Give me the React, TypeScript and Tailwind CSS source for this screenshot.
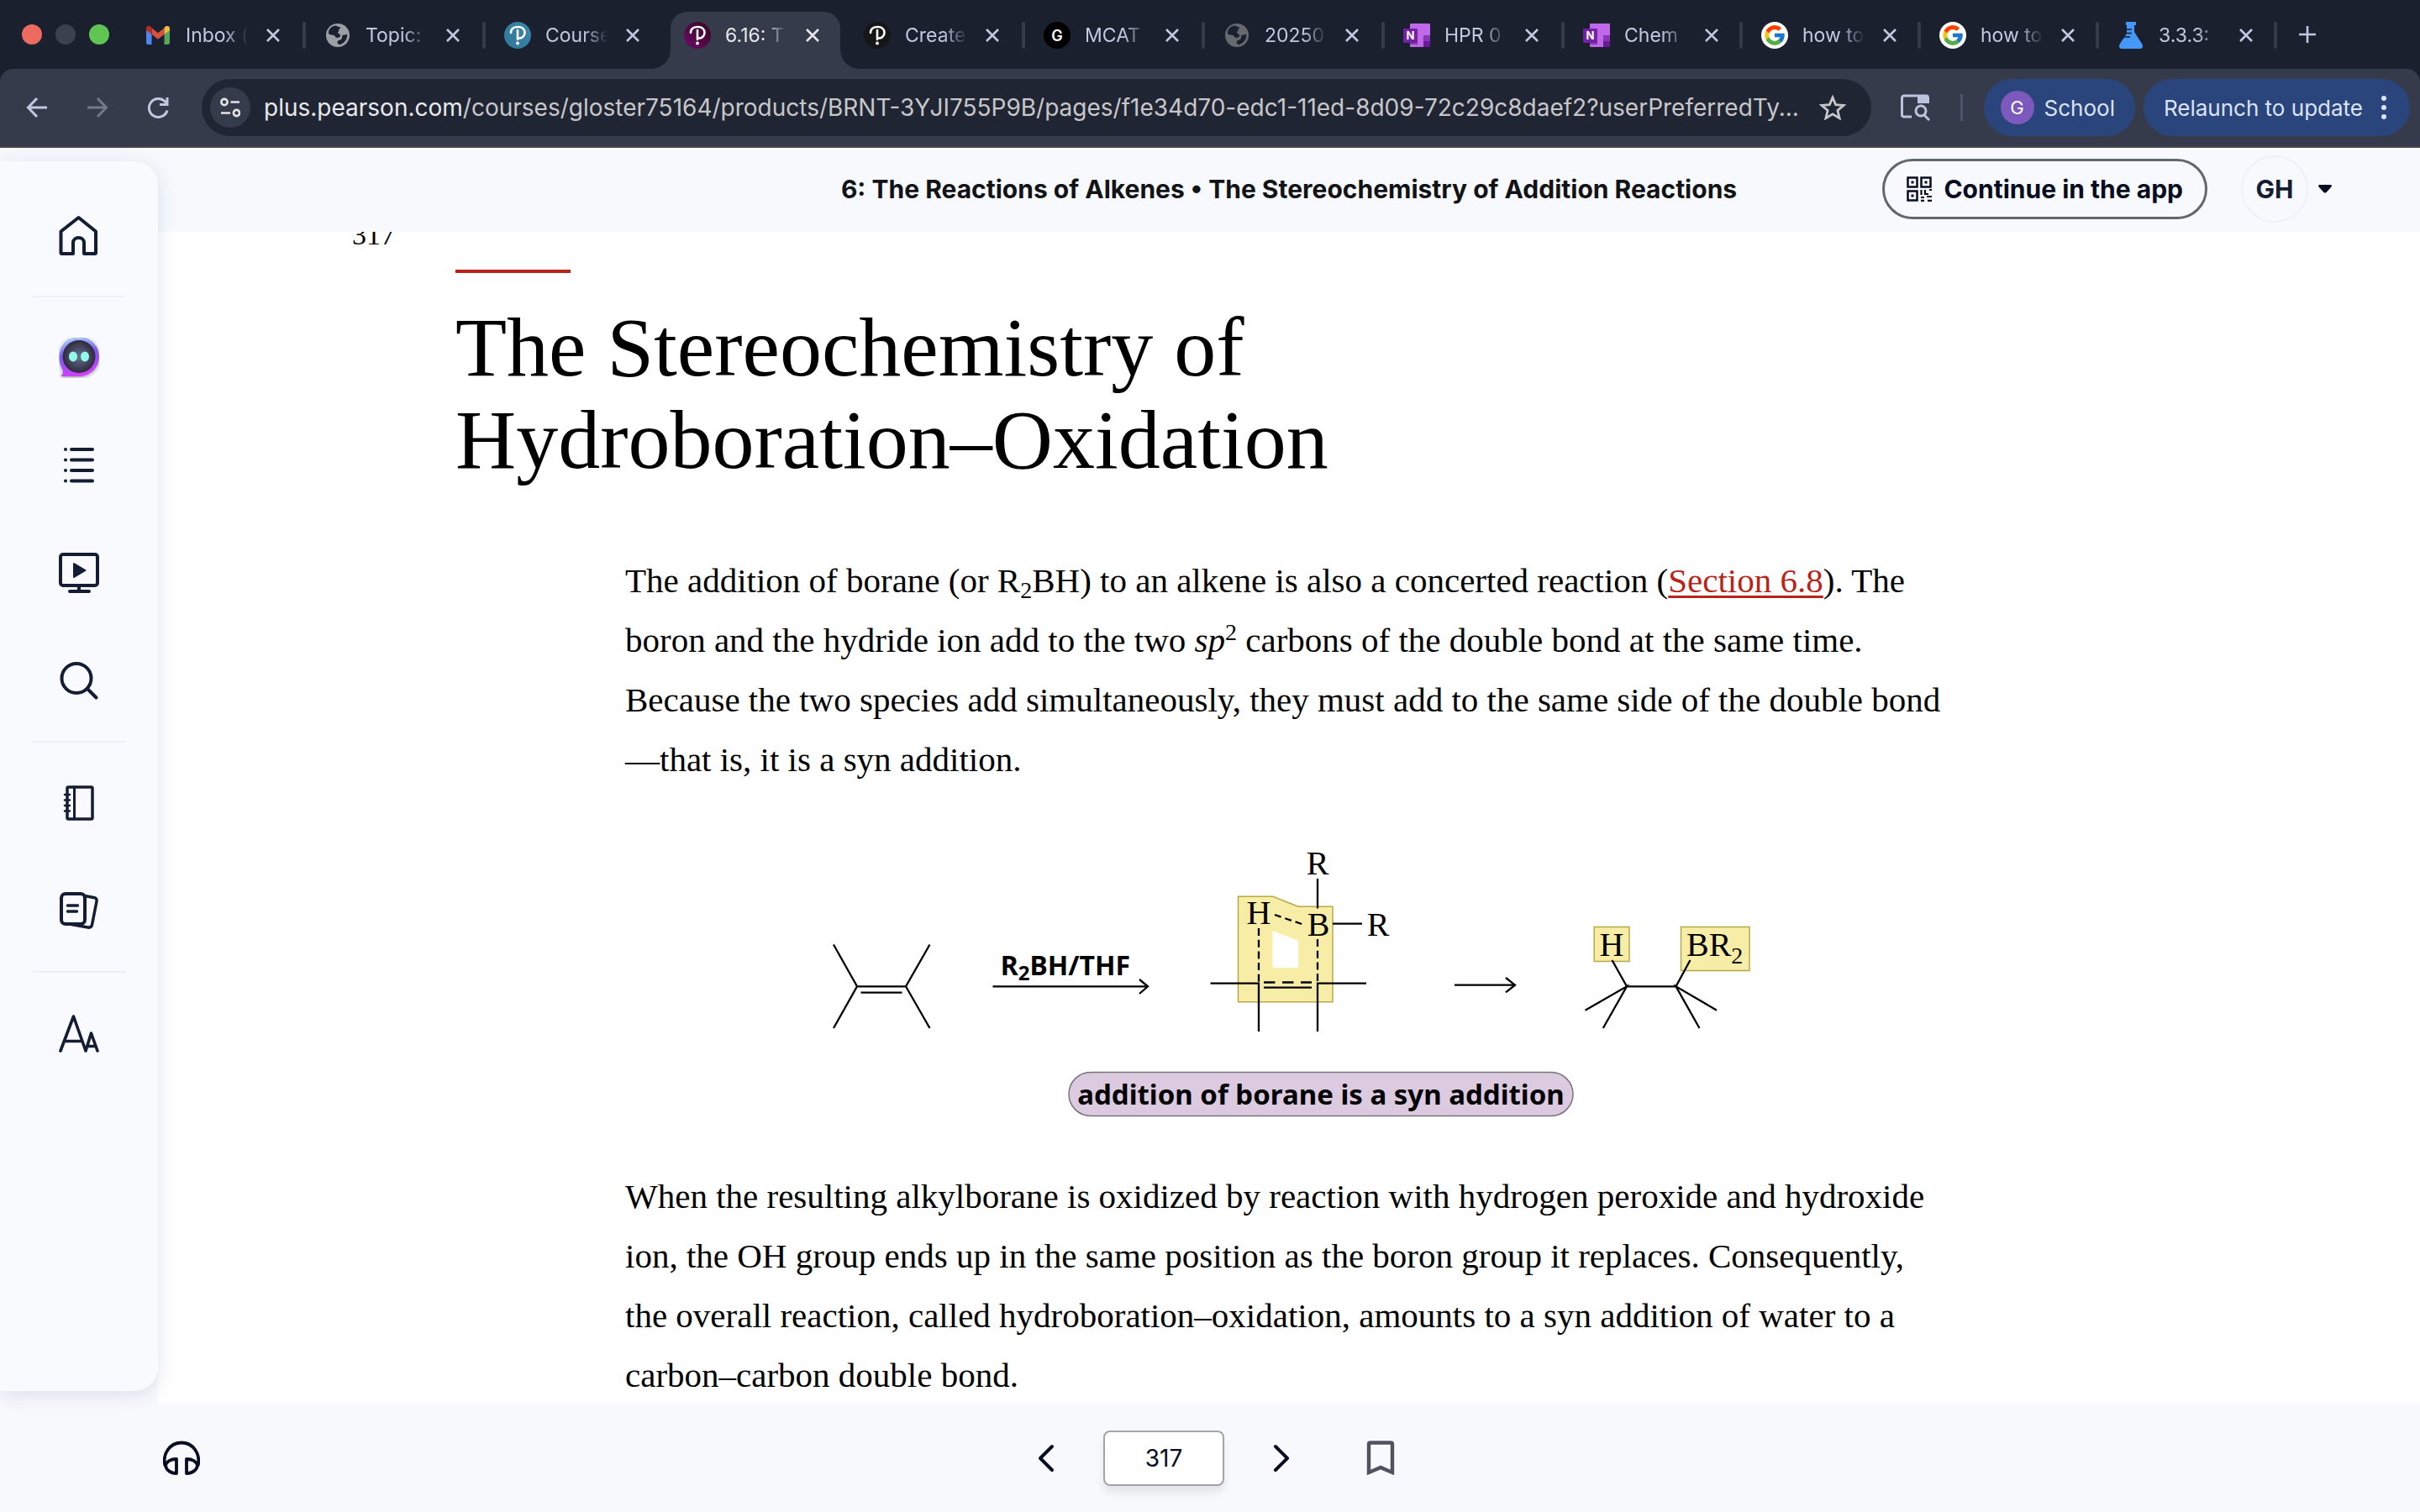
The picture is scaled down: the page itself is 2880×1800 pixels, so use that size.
import type { ReactNode } from "react";
import { FcGoogle } from "react-icons/fc";

const PearsonIcon = ({ id, from, to }: { id: string; from: string; to: string }) => (
  <svg viewBox="0 0 32 32" className="size-8">
    <defs>
      <linearGradient id={id} x1="1" y1="0" x2="0" y2="1">
        <stop offset="0" stopColor={from} />
        <stop offset="1" stopColor={to} />
      </linearGradient>
    </defs>
    <circle cx="16" cy="16" r="16" fill={`url(#${id})`} />
    <path d="M8 13c0-5 4-7 8.500-7 5 0 8 3 8 7s-3.500 7-8 6.500M16 10v11" fill="none" stroke="#fff" strokeWidth="2.600" strokeLinecap="round" />
    <circle cx="16" cy="25.500" r="1.900" fill="#fff" />
  </svg>
);

const GlobeIcon = ({ color }: { color: string }) => (
  <svg viewBox="0 0 28 28" className="size-7">
    <circle cx="14" cy="14" r="14" fill={color} />
    <path d="M12 2.500c2 2 6 1 6 4s-4 2-4 4 3 1 3 4-5 3-7 1-6-1-7-4C3 6 7 3 12 2.500zM25 12c1 5-2 11-8 13-3 0-4-2-3-4s5-1 5-4 1-4 6-5z" fill="#1b202f" />
    <path d="M3 13c3 1 8 0 8 3s-3 2-3 4l1 4c-4-2-6-7-6-11zM18 4c-1 3-3 2-3 4s5 1 5 4 3 1 5 1c0-4-3-8-7-9z" fill={color} />
  </svg>
);

const GmailIcon = () => (
  <svg viewBox="0 0 28 22" className="w-7">
    <path d="M0 3v17a2 2 0 0 0 2 2h4.500V9z" fill="#4f86ec" />
    <path d="M28 3v17a2 2 0 0 1-2 2h-4.500V9z" fill="#58a55c" />
    <path d="M6.500 2.200 14 8.200l7.500-6v7.600L14 15.800l-7.500-6z" fill="#d85040" />
    <path d="M0 3c0-3 3.400-4 5.400-2.200l1.100 1.400v7.600L0 5z" fill="#b52d25" />
    <path d="M28 3c0-3-3.400-4-5.400-2.200l-1.100 1.400v7.600L28 5z" fill="#f2be42" />
  </svg>
);

const OneNoteIcon = () => (
  <svg viewBox="0 0 32 28" className="w-8">
    <rect x="8" width="24" height="28" rx="1" fill="#c069e8" />
    <rect x="24" y="14" width="8" height="7" fill="#8a35b8" />
    <rect x="24" y="21" width="8" height="7" fill="#6a1a94" />
    <rect x="8" y="22" width="9" height="3" fill="#8440a8" />
    <rect y="6" width="17" height="17" rx="1" fill="#7222a3" />
    <text x="8.500" y="19" textAnchor="middle" fontSize="13" fontWeight="700" fontFamily="Inter" fill="#fff">N</text>
  </svg>
);

const FlaskIcon = () => (
  <svg viewBox="0 0 30 32" className="h-8">
    <path d="M9 0h12v4h-2v8l9 14c2 3 1 6-3 6H5c-4 0-5-3-3-6l8-12V4H9z" fill="#4598f7" />
    <path d="M10 9h6M10 13.500h6M7 18h7" stroke="#1b202f" strokeWidth="1.600" />
  </svg>
);

const GBadge = () => (
  <span className="flex size-8 items-center justify-center rounded-full bg-black text-[18px] font-semibold text-white">G</span>
);

const GoogleBadge = () => (
  <span className="flex size-8 items-center justify-center rounded-full bg-white">
    <FcGoogle className="size-7" />
  </span>
);

const tabs: { label: string; icon: ReactNode; active?: boolean; line?: boolean; narrow?: boolean }[] = [
  { label: "Inbox (", icon: <GmailIcon />, line: true },
  { label: "Topic:", icon: <GlobeIcon color="#9b9fa3" />, line: true },
  { label: "Course", icon: <PearsonIcon id="p1" from="#3b87a8" to="#2f769b" /> },
  { label: "6.16: T", icon: <PearsonIcon id="p2" from="#33051f" to="#6d0b6b" />, active: true },
  { label: "Create", icon: <PearsonIcon id="p3" from="#161616" to="#161616" />, line: true },
  { label: "MCAT", icon: <GBadge />, line: true },
  { label: "20250", icon: <GlobeIcon color="#66696d" />, line: true },
  { label: "HPR 0", icon: <OneNoteIcon />, line: true },
  { label: "Chem", icon: <OneNoteIcon />, line: true, narrow: true },
  { label: "how to", icon: <GoogleBadge />, line: true, narrow: true },
  { label: "how to", icon: <GoogleBadge />, line: true, narrow: true },
  { label: "3.3.3:", icon: <FlaskIcon />, line: true, narrow: true },
];

function Flare({ className }: { className: string }) {
  return (
    <svg viewBox="0 0 24 24" className={className}>
      <path d="M24 0v24H0C14 24 24 14 24 0z" fill="#363b4b" />
    </svg>
  );
}

function TabStrip() {
  return (
    <div className="flex h-[82px] items-stretch bg-[#1b202f] pl-[26px]">
      <div className="flex w-[124px] shrink-0 items-center gap-4">
        <span className="size-6 rounded-full bg-[#ec6a5e]" />
        <span className="size-6 rounded-full bg-[#3c4150]" />
        <span className="size-6 rounded-full bg-[#61c554]" />
      </div>
      {tabs.map((tab, i) => (
        <div key={i} className={`relative flex min-w-0 items-center pt-0.5 ${tab.narrow ? "w-[212px]" : "w-[214px]"}`}>
          {tab.active && (
            <div className="absolute inset-x-1.5 top-3.5 bottom-0 rounded-t-[20px] bg-[#363b4b]">
              <Flare className="absolute -left-6 bottom-0 size-6" />
              <Flare className="absolute -right-6 bottom-0 size-6 -scale-x-100" />
            </div>
          )}
          <span className="relative ml-[22px] flex w-8 shrink-0 justify-center">{tab.icon}</span>
          <a
            href="#"
            className={`relative ml-[17px] w-[76px] shrink-0 overflow-hidden text-[23px] leading-8 whitespace-nowrap [mask-image:linear-gradient(to_right,black_60%,transparent_98%)] ${
              tab.active ? "text-[#e6e7ea]" : "text-[#c2c8e0]"
            }`}
          >
            {tab.label}
          </a>
          <button aria-label="Close tab" className="relative ml-4 flex size-6 shrink-0 items-center justify-center">
            <svg viewBox="0 0 16 16" className="size-4">
              <path d="M1 1l14 14M15 1L1 15" stroke={tab.active ? "#e6e7ea" : "#c2c8e0"} strokeWidth="2.600" />
            </svg>
          </button>
          {tab.line && <span className="ml-auto h-8 w-1 rounded-full bg-[#363b4b]" />}
        </div>
      ))}
      <button aria-label="New tab" className="ml-5 flex w-8 shrink-0 items-center justify-center">
        <svg viewBox="0 0 22 22" className="size-[22px]">
          <path d="M11 1v20M1 11h20" stroke="#c2c8e0" strokeWidth="2.600" />
        </svg>
      </button>
    </div>
  );
}

function Toolbar() {
  return (
    <div className="bg-[#1b202f]">
      <div className="flex h-[94px] items-center rounded-t-[16px] border-b-2 border-[#47474b] bg-[#363b4b] pr-3 pl-5">
        <button aria-label="Back" className="flex size-12 items-center justify-center">
          <svg viewBox="0 0 26 26" className="size-[26px]" fill="none" stroke="#c2c8e0" strokeWidth="3">
            <path d="M25 13H3M13 2L2.500 13 13 24" />
          </svg>
        </button>
        <button aria-label="Forward" className="ml-6 flex size-12 items-center justify-center">
          <svg viewBox="0 0 26 26" className="size-[26px]" fill="none" stroke="#757989" strokeWidth="3">
            <path d="M1 13h22M13 2l10.500 11L13 24" />
          </svg>
        </button>
        <button aria-label="Reload" className="ml-6 flex size-12 items-center justify-center">
          <svg viewBox="0 0 26 26" className="size-[26px]" fill="none" stroke="#c2c8e0" strokeWidth="3">
            <path d="M24 16.500A11 11 0 1 1 21 5.500l3 3M24 1v8.500h-9" />
          </svg>
        </button>
        <div className="ml-7 flex h-[68px] min-w-0 flex-1 items-center rounded-full bg-[#202534] pr-6 pl-2.5">
          <button aria-label="Site information" className="flex size-12 shrink-0 items-center justify-center rounded-full bg-[#363b4b]">
            <svg viewBox="0 0 24 24" className="size-6" fill="none" stroke="#e3e4e8" strokeWidth="2.600">
              <circle cx="5" cy="5.500" r="3.600" />
              <path d="M12.500 5.500H23M1 18.500h11" />
              <circle cx="19.500" cy="18.500" r="3.600" />
            </svg>
          </button>
          <p className="ml-4 flex-1 truncate text-[28px] leading-9 text-[#c7c7ca]">
            <span className="text-[#e8e9ec]">plus.pearson.com</span>
            /courses/gloster75164/products/BRNT-3YJI755P9B/pages/f1e34d70-edc1-11ed-8d09-72c29c8daef2?userPreferredTy...
          </p>
          <button aria-label="Bookmark this tab" className="flex size-11 shrink-0 items-center justify-center">
            <svg viewBox="0 0 32 30" className="w-8" fill="none" stroke="#c7c7ca" strokeWidth="2.800">
              <path d="M16 3l3.600 8.600 9.400.8-7.100 6.100 2.200 9.200L16 22.800l-8.100 4.900 2.200-9.200L3 12.400l9.400-.8z" />
            </svg>
          </button>
        </div>
        <button aria-label="Search side panel" className="ml-[30px] flex size-11 items-center justify-center">
          <svg viewBox="0 0 36 32" className="w-9" fill="none" stroke="#bcc4dd" strokeWidth="3">
            <path d="M14 27H5a2.500 2.500 0 0 1-2.500-2.500v-20A2.500 2.500 0 0 1 5 2h26a2.500 2.500 0 0 1 2.500 2.500V11" />
            <path d="M21 2h12.500v9H21z" fill="#bcc4dd" stroke="none" />
            <circle cx="25" cy="20" r="6" />
            <path d="M29 25l6 6" />
          </svg>
        </button>
        <span className="ml-8 h-8 w-[3px] bg-[#4d546a]" />
        <button className="ml-[25px] flex h-[68px] items-center gap-3 rounded-full bg-[#2a457c] pr-6 pl-5 text-[26px] text-[#dce3f8]">
          <span className="flex size-10 items-center justify-center rounded-full bg-[#7c59bd] text-[22px] text-white">G</span>
          School
        </button>
        <button className="ml-2.5 flex h-[68px] items-center gap-[22px] rounded-full bg-[#2a457c] pr-7 pl-6 text-[26px] whitespace-nowrap text-[#dce3f8]">
          Relaunch to update
          <svg viewBox="0 0 6 30" className="h-[30px]" fill="#dce3f8">
            <circle cx="3" cy="4" r="3" />
            <circle cx="3" cy="15" r="3" />
            <circle cx="3" cy="26" r="3" />
          </svg>
        </button>
      </div>
    </div>
  );
}

function NavButton({ label, children }: { label: string; children: ReactNode }) {
  return (
    <button aria-label={label} className="flex h-32 items-center justify-center">
      <svg viewBox="0 0 48 48" className="size-12" fill="none" stroke="#141d33" strokeWidth="4" strokeLinecap="round" strokeLinejoin="round">
        {children}
      </svg>
    </button>
  );
}

const Divider = () => <hr className="mx-[38px] my-2 border-t-2 border-[#edeff9]" />;

function Sidebar() {
  return (
    <aside className="relative z-10 flex w-[188px] shrink-0 bg-[#f7f9fd] pt-4 pb-[15px]">
      <nav className="flex flex-1 flex-col rounded-r-[28px] bg-[#f8fafe] pt-6 shadow-[0_4px_24px_rgba(20,40,90,0.12)]">
        <NavButton label="Home">
          <path d="M2.500 45V19.500L23.500 3l20.500 16.500V45a1 1 0 0 1-1 1H30V33c0-8-13-8-13 0v13H3.500a1 1 0 0 1-1-1z" />
        </NavButton>
        <Divider />
        <NavButton label="Study assistant">
          <defs>
            <linearGradient id="bubble" x1="0.300" y1="0" x2="0.500" y2="1">
              <stop offset="0" stopColor="#a9d4fb" />
              <stop offset="0.450" stopColor="#7c56f5" />
              <stop offset="1" stopColor="#d63ffc" />
            </linearGradient>
            <radialGradient id="face">
              <stop offset="0" stopColor="#65718f" />
              <stop offset="1" stopColor="#30293f" />
            </radialGradient>
            <filter id="soft" x="-20%" y="-20%" width="140%" height="140%">
              <feDropShadow dx="0" dy="1" stdDeviation="2" floodOpacity="0.450" />
            </filter>
          </defs>
          <path d="M24-1c13 0 24 10 24 23.500S37 46 24 46H2c3-2 4-5 2-9C-5 18 5-1 24-1z" fill="url(#bubble)" stroke="none" filter="url(#soft)" />
          <circle cx="24" cy="22.500" r="19.500" fill="url(#face)" stroke="none" />
          <ellipse cx="17" cy="22.500" rx="5" ry="6" fill="#92fbe8" stroke="none" />
          <ellipse cx="31" cy="22.500" rx="5" ry="6" fill="#92fbe8" stroke="none" />
        </NavButton>
        <NavButton label="Table of contents">
          <path d="M15 5h25M15 17.500h25M15 30h25M15 42.500h25M8 5h0M8 17.500h0M8 30h0M8 42.500h0" />
        </NavButton>
        <NavButton label="Videos">
          <rect x="2" y="2" width="44" height="37" rx="3" />
          <path d="M24 39v6M13 46h23" />
          <path d="M18 13l13.500 8L18 29z" fill="#141d33" strokeWidth="2" />
        </NavButton>
        <NavButton label="Search">
          <circle cx="21" cy="21.500" r="17.500" />
          <path d="M34 34l10.500 10.500" />
        </NavButton>
        <Divider />
        <NavButton label="Notebook">
          <rect x="10" y="5" width="30" height="38" rx="1.500" strokeWidth="3.500" />
          <path d="M18.500 5v38" strokeWidth="3" />
          <path d="M7 14h6M7 20.500h6M7 27h6M7 33.500h6" strokeWidth="2.500" />
        </NavButton>
        <NavButton label="Flashcards">
          <rect x="3" y="4" width="28" height="36" rx="5" />
          <path d="M10.500 18h12M10.500 25h11" strokeWidth="3.500" />
          <path d="M31 6.500l10.500 2c3 .500 4 2 3.500 4.500L39.500 41c-.500 2.500-2 3.500-5 3L15 40.500" strokeWidth="3.500" />
        </NavButton>
        <Divider />
        <NavButton label="Text size">
          <path d="M2 45L17.500 4 32 45M7.500 33.500h20M32 45l6.500-21L46 45M34 39.500h10" strokeWidth="3.600" />
        </NavButton>
      </nav>
    </aside>
  );
}

const QrIcon = () => (
  <svg viewBox="0 0 30 30" className="size-[30px]" fill="none" stroke="#060d21" strokeWidth="2.500">
    <path d="M1.500 1.500h11v11h-11zM17.500 1.500h11v11h-11zM1.500 17.500h11v11h-11z" />
    <path d="M5.500 5.500h3v3h-3zM21.500 5.500h3v3h-3zM5.500 21.500h3v3h-3z" fill="#060d21" stroke="none" />
    <path d="M17.500 16v6M22 16v5h4M27 16h3M17 25h4M24 24h6M17 28.800h4M25 28.800h5" strokeWidth="2.200" />
  </svg>
);

function PageHeader() {
  return (
    <header className="grid h-[100px] grid-cols-[1fr_auto_1fr] items-center bg-[#f7f9fd] pb-0.5">
      <h1 className="col-start-2 text-[30px] leading-10 font-bold whitespace-nowrap text-[#111317]">
        6: The Reactions of Alkenes • The Stereochemistry of Addition Reactions
      </h1>
      <div className="flex items-center justify-end pr-[105px]">
        <button className="flex h-[72px] items-center gap-[14px] rounded-full border-[3px] border-[#63656f] px-[26px] text-[30px] font-bold whitespace-nowrap text-[#060d21]">
          <QrIcon />
          Continue in the app
        </button>
        <button className="ml-10 flex items-center gap-3 text-[30px] font-bold text-[#141d33]">
          <span className="flex size-20 items-center justify-center rounded-full border-2 border-[#eef1fa]">GH</span>
          <svg viewBox="0 0 16 10" className="w-4">
            <path d="M1 0h14q2 1 0 3L9.500 9q-1.500 1.500-3 0L1 3q-2-2 0-3z" fill="#060d21" />
          </svg>
        </button>
      </div>
    </header>
  );
}

function BoraneFigure() {
  return (
    <svg
      viewBox="744 1000 1566 340"
      className="block w-full"
      fill="none"
      stroke="#000"
      strokeWidth="2.300"
      fontFamily="'Liberation Serif', serif"
      fontSize="40"
      role="img"
      aria-label="Syn addition of borane"
    >
      <path d="M992 1123.500l28 49.800h58l28.500-49.800M992 1223l28-49.700M1078 1173.300l28.500 49.700M1024.500 1180.600h49" />
      <path d="M1181.500 1173.300H1366M1356 1165l10 8.300-10 8.700" />
      <path d="M1473.500 1066.300H1515l30 12h41v113.400h-112.500z" fill="#f8eda7" stroke="#b8a945" strokeWidth="1.500" />
      <path d="M1514.500 1107l30.500 12v32h-30.500z" fill="#fff" stroke="none" />
      <path d="M1568 1045v35.500M1586 1098.600h35M1440.500 1169.700h57.500V1227M1626 1169.700h-58V1227M1504 1174.700h57" />
      <path d="M1517 1088l35 12" strokeDasharray="8 5" />
      <path d="M1498 1104v66" strokeDasharray="9 4.700" />
      <path d="M1568 1117v53" strokeDasharray="9 4.700" />
      <path d="M1504 1168.500h57" strokeDasharray="13.500 8.500" />
      <path d="M1731 1171.700h72M1792 1163l11 8.700-11 8.700" />
      <path d="M1897.200 1102.500H1939v41h-41.800zM2000.500 1102.500H2082v52h-81.500z" fill="#f8eda7" stroke="#b8a945" strokeWidth="1.500" />
      <path d="M1918.500 1142l17.500 31.300h58.500l17-31.300M1886.500 1201.700l49.500-28.400-28.200 49.700M2043 1201.700l-48.500-28.400 28 49.700" />
      <rect x="1272" y="1275.500" width="600" height="52" rx="26" fill="#dbcae0" stroke="#77737b" strokeWidth="1.500" />
      <g fill="#000" stroke="none" textAnchor="middle">
        <text x="1498" y="1099">H</text>
        <text x="1569" y="1113">B</text>
        <text x="1568" y="1040">R</text>
        <text x="1640" y="1113">R</text>
        <text x="1918" y="1137">H</text>
        <text x="2007" y="1137" textAnchor="start">
          BR<tspan fontSize="28" dy="9">2</tspan>
        </text>
        <g fontFamily="'Noto Sans', sans-serif" fontWeight="700">
          <text x="1268" y="1160" fontSize="32">
            R<tspan fontSize="24" dy="6">2</tspan>
            <tspan dy="-6">BH/THF</tspan>
          </text>
          <text x="1572" y="1314" fontSize="33">addition of borane is a syn addition</text>
        </g>
      </g>
    </svg>
  );
}

function Article() {
  return (
    <main className="min-h-0 flex-1 overflow-hidden bg-white font-['Liberation_Serif',serif] text-black">
      <article className="mx-auto -mt-4 max-w-[2230px]">
        <p className="text-[34px] leading-10">317</p>
        <div className="mt-[21px] ml-[123px] h-1 w-[137px] bg-[#b92419]" />
        <h2 className="mt-[34px] ml-[123px] text-[100px] leading-[110px]">
          The Stereochemistry of
          <br />
          Hydroboration–Oxidation
        </h2>
        <div className="ml-[325px] max-w-[1566px] text-[41px] leading-[71px] whitespace-nowrap">
          <p className="mt-[77px]">
            The addition of borane (or R<sub className="text-[28px] leading-none">2</sub>BH) to an alkene is also a concerted reaction (
            <a href="#" className="text-[#b92419] underline decoration-[3px] underline-offset-4">
              Section 6.8
            </a>
            ). The
            <br />
            boron and the hydride ion add to the two <i>sp</i>
            <sup className="text-[28px] leading-none">2</sup> carbons of the double bond at the same time.
            <br />
            Because the two species add simultaneously, they must add to the same side of the double bond
            <br />
            —that is, it is a syn addition.
          </p>
          <div className="mt-[61px]">
            <BoraneFigure />
          </div>
          <p className="mt-12">
            When the resulting alkylborane is oxidized by reaction with hydrogen peroxide and hydroxide
            <br />
            ion, the OH group ends up in the same position as the boron group it replaces. Consequently,
            <br />
            the overall reaction, called hydroboration–oxidation, amounts to a syn addition of water to a
            <br />
            carbon–carbon double bond.
          </p>
        </div>
      </article>
    </main>
  );
}

function Footer() {
  return (
    <footer className="grid h-[129px] shrink-0 grid-cols-[1fr_auto_1fr] items-center bg-[#f7f9fd]">
      <button aria-label="Listen" className="ml-[192px] flex size-12 items-center justify-center">
        <svg viewBox="0 0 44 42" className="w-11" fill="none" stroke="#060d21" strokeWidth="3.800" strokeLinejoin="round">
          <path d="M2.500 30C-1 16 8 2.500 22 2.500S45 16 41.500 30" />
          <path d="M16 22v17c-7 0-12-4-13-9 1-5 6-8 13-8zM28 22v17c7 0 12-4 13-9-1-5-6-8-13-8z" />
        </svg>
      </button>
      <div className="flex items-center pl-2">
        <button aria-label="Previous page" className="flex size-12 items-center justify-center">
          <svg viewBox="0 0 20 34" className="h-[34px]" fill="none" stroke="#060d21" strokeWidth="4" strokeLinecap="round" strokeLinejoin="round">
            <path d="M17 3L3 17l14 14" />
          </svg>
        </button>
        <input
          aria-label="Page number"
          defaultValue="317"
          className="mx-11 h-[66px] w-36 rounded-lg border-2 border-[#a3a4a9] bg-white text-center text-[28px] text-[#060d21] shadow-[0_8px_10px_rgba(0,0,0,0.08)]"
        />
        <button aria-label="Next page" className="flex size-12 items-center justify-center">
          <svg viewBox="0 0 20 34" className="h-[34px]" fill="none" stroke="#060d21" strokeWidth="4" strokeLinecap="round" strokeLinejoin="round">
            <path d="M3 3l14 14L3 31" />
          </svg>
        </button>
        <button aria-label="Bookmark page" className="ml-[70px] flex size-12 items-center justify-center">
          <svg viewBox="0 0 34 42" className="h-[42px]" fill="none" stroke="#50525e" strokeWidth="4.400" strokeLinejoin="miter">
            <path d="M3 38V4.500Q3 2.500 5 2.500h24q2 0 2 2V38l-14-6z" />
          </svg>
        </button>
      </div>
    </footer>
  );
}

export default function App() {
  return (
    <div className="flex h-screen flex-col overflow-hidden font-['Inter',sans-serif]">
      <TabStrip />
      <Toolbar />
      <div className="flex min-h-0 flex-1">
        <Sidebar />
        <div className="flex min-w-0 flex-1 flex-col">
          <PageHeader />
          <Article />
        </div>
      </div>
      <Footer />
    </div>
  );
}
